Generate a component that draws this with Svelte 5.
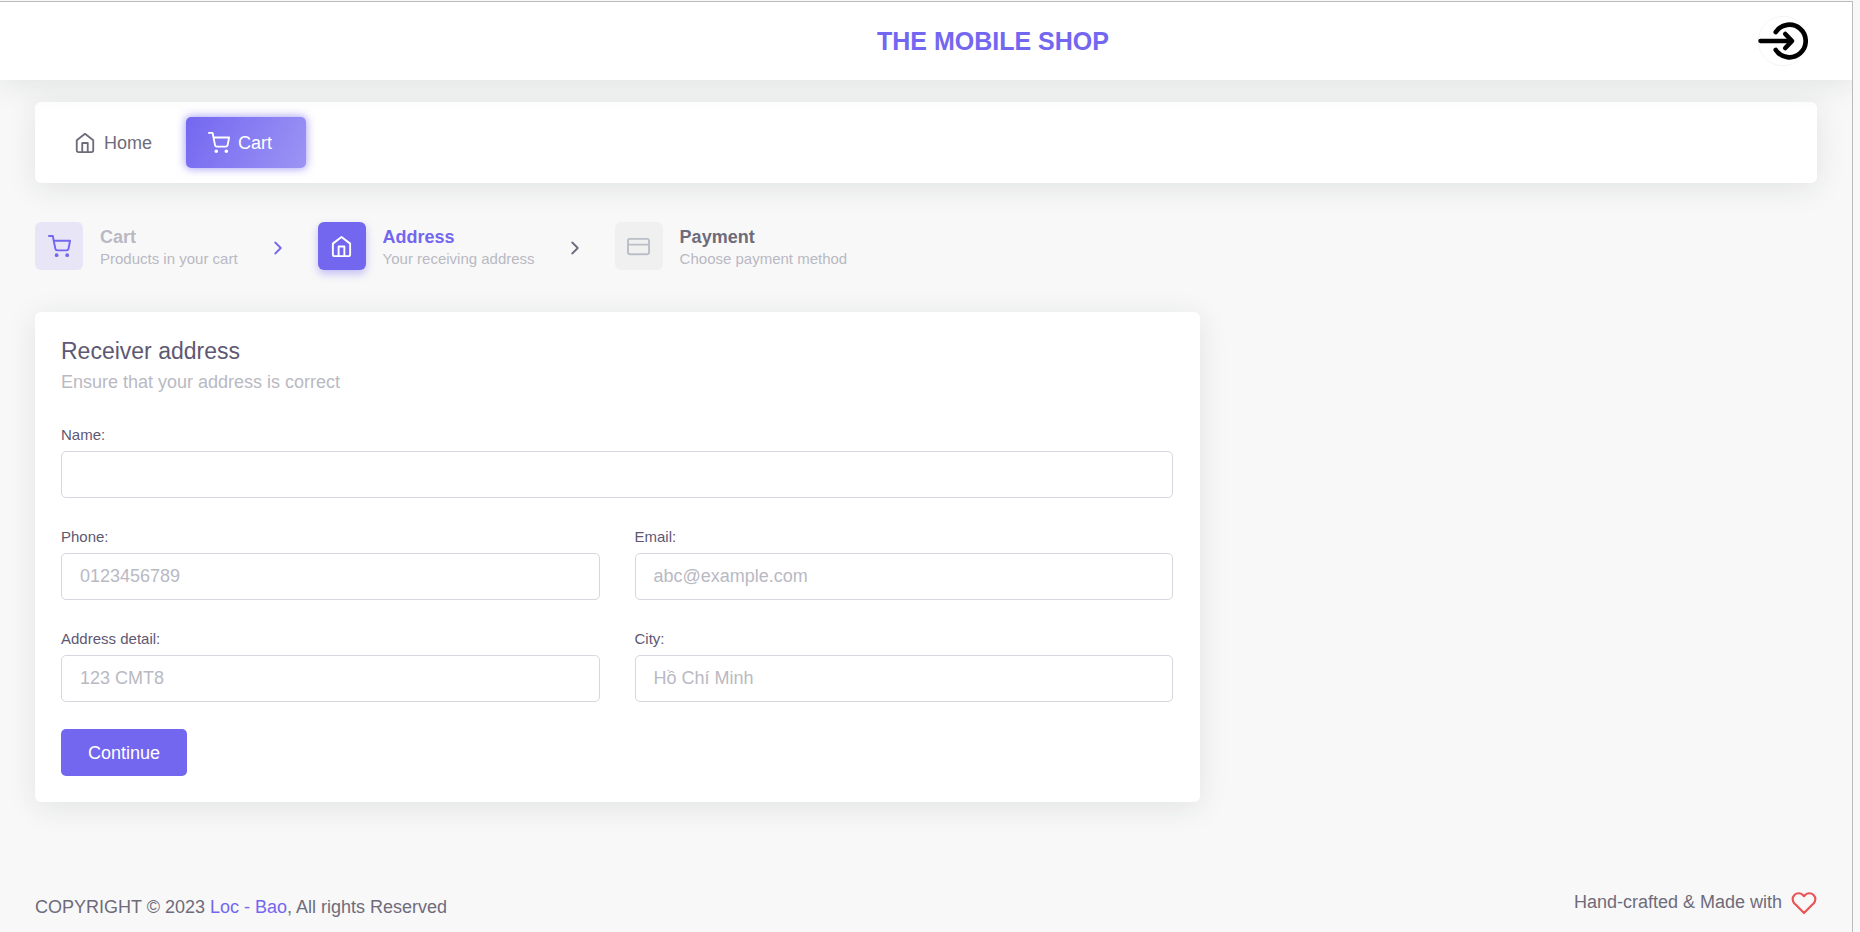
<script lang="ts">
  type IconName = 'home' | 'cart' | 'card' | 'chevron' | 'heart';

  const steps: { title: string; text: string; icon: IconName; state: string }[] = [
    { title: 'Cart', text: 'Products in your cart', icon: 'cart', state: 'done' },
    { title: 'Address', text: 'Your receiving address', icon: 'home', state: 'active' },
    { title: 'Payment', text: 'Choose payment method', icon: 'card', state: 'next' },
  ];

  const fields = [
    { id: 'name', label: 'Name:', placeholder: '', type: 'text', wide: true },
    { id: 'phone', label: 'Phone:', placeholder: '0123456789', type: 'tel', wide: false },
    { id: 'email', label: 'Email:', placeholder: 'abc@example.com', type: 'email', wide: false },
    { id: 'address', label: 'Address detail:', placeholder: '123 CMT8', type: 'text', wide: false },
    { id: 'city', label: 'City:', placeholder: 'Hồ Chí Minh', type: 'text', wide: false },
  ];
</script>

{#snippet icon(name: IconName, size: number)}
  <svg
    width={size}
    height={size}
    viewBox="0 0 24 24"
    fill="none"
    stroke="currentColor"
    stroke-width="2"
    stroke-linecap="round"
    stroke-linejoin="round"
    aria-hidden="true"
  >
    {#if name === 'home'}
      <path d="M3 9l9-7 9 7v11a2 2 0 0 1-2 2H5a2 2 0 0 1-2-2z" />
      <polyline points="9 22 9 12 15 12 15 22" />
    {:else if name === 'cart'}
      <circle cx="9" cy="21" r="1" />
      <circle cx="20" cy="21" r="1" />
      <path d="M1 1h4l2.68 13.39a2 2 0 0 0 2 1.61h9.72a2 2 0 0 0 2-1.61L23 6H6" />
    {:else if name === 'card'}
      <rect x="1" y="4" width="22" height="16" rx="2" ry="2" />
      <line x1="1" y1="10" x2="23" y2="10" />
    {:else if name === 'chevron'}
      <polyline points="9 18 15 12 9 6" />
    {:else}
      <path
        d="M20.84 4.61a5.5 5.5 0 0 0-7.78 0L12 5.67l-1.06-1.06a5.5 5.5 0 0 0-7.78 7.78l1.06 1.06L12 21.23l7.78-7.78 1.06-1.06a5.5 5.5 0 0 0 0-7.78z"
      />
    {/if}
  </svg>
{/snippet}

<div class="page">
  <header class="topbar">
    <h1>THE MOBILE SHOP</h1>
    <button class="login" type="button" aria-label="Log in">
      <svg width="50" height="50" viewBox="0 0 50 50" fill="none" aria-hidden="true">
        <circle cx="25" cy="25" r="24.7" stroke="#ececec" stroke-width="0.6" />
        <g stroke="#000" stroke-width="4.7" stroke-linecap="round" stroke-linejoin="round">
          <path d="M17.8 16A16.3 16.3 0 1 1 17.8 34" />
          <path d="M2.4 25H33" stroke-width="4.3" />
          <path d="M27.3 18L34 25L27.3 32" />
        </g>
      </svg>
    </button>
  </header>

  <nav class="menu card">
    <a href="#home">{@render icon('home', 22)}Home</a>
    <a href="#cart" class="current">{@render icon('cart', 22)}Cart</a>
  </nav>

  <main>
    <ol class="steps">
      {#each steps as step, i}
        {#if i > 0}
          <li class="arrow" class:passed={i === 1}>{@render icon('chevron', 22)}</li>
        {/if}
        <li class="step {step.state}">
          <span class="box">{@render icon(step.icon, 23)}</span>
          <span class="label">
            <strong>{step.title}</strong>
            <small>{step.text}</small>
          </span>
        </li>
      {/each}
    </ol>

    <form class="receiver card" onsubmit={(e) => e.preventDefault()}>
      <h2>Receiver address</h2>
      <p>Ensure that your address is correct</p>
      <div class="fields">
        {#each fields as f}
          <div class="field" class:wide={f.wide}>
            <label for={f.id}>{f.label}</label>
            <input id={f.id} type={f.type} placeholder={f.placeholder} />
          </div>
        {/each}
      </div>
      <button class="submit" type="submit">Continue</button>
    </form>
  </main>

  <footer>
    <span class="copyright">COPYRIGHT © 2023 <a href="#authors">Loc - Bao</a>, All rights Reserved</span>
    <span class="made">Hand-crafted &amp; Made with <span class="heart">{@render icon('heart', 26)}</span></span>
  </footer>
</div>

<style>
  :global(body) {
    background: #f8f8f8;
    color: #6e6b7b;
    font-family: 'Liberation Sans', Arial, sans-serif;
    font-size: 18px;
    line-height: 26px;
  }

  :global(*) {
    box-sizing: border-box;
  }

  svg {
    display: block;
    flex: none;
  }

  a {
    color: #7367f0;
    text-decoration: none;
  }

  .page {
    display: flex;
    flex-direction: column;
    min-height: calc(100vh - 1px);
    margin: 1px 7px 0 0;
    border-top: 1px solid #bbb;
    border-right: 1px solid #bbb;
    overflow: hidden;
  }

  .card {
    background: #fff;
    border-radius: 6px;
    box-shadow: 0 5px 30px rgba(34, 41, 47, 0.1);
  }

  .topbar {
    position: relative;
    z-index: 1;
    display: flex;
    align-items: center;
    padding: 14px 44px 14px 228px;
    background: #fff;
    box-shadow: 0 5px 30px rgba(34, 41, 47, 0.1);
  }

  h1 {
    flex: 1;
    margin: 0;
    color: #7367f0;
    font-size: 25px;
    line-height: 30px;
    font-weight: 700;
    text-align: center;
  }

  .login {
    padding: 0;
    border: 0;
    border-radius: 50%;
    background: none;
  }

  .menu {
    display: flex;
    gap: 12px;
    margin: 22px 35px 0;
    padding: 15px 17px;
  }

  .menu a {
    display: flex;
    align-items: center;
    gap: 8px;
    padding: 13px 22px 12px;
    border-radius: 5px;
    color: #6e6b7b;
  }

  .menu .current {
    padding-right: 34px;
    background: linear-gradient(118deg, #7367f0, rgba(115, 103, 240, 0.7));
    box-shadow: 0 0 8px 1px rgba(115, 103, 240, 0.6);
    color: #fff;
  }

  main {
    padding: 39px 35px 0;
  }

  .steps {
    display: flex;
    align-items: center;
    gap: 29px;
    margin: 0 0 42px;
    padding: 0;
    list-style: none;
  }

  .arrow {
    padding-top: 4px;
  }

  .step {
    display: flex;
    align-items: flex-start;
    gap: 17px;
  }

  .box {
    display: grid;
    place-items: center;
    width: 48px;
    height: 48px;
    border-radius: 6px;
    background: #f0f0f0;
    color: #babfc7;
  }

  .label {
    padding-top: 4px;
  }

  .label strong,
  .label small {
    display: block;
    line-height: 22px;
  }

  .label small {
    color: #b9b9c3;
    font-size: 15px;
  }

  .done strong {
    color: #b9b9c3;
  }

  .done .box {
    background: #e7e5f6;
    color: #7367f0;
  }

  .active strong {
    color: #7367f0;
  }

  .active .box {
    background: #7367f0;
    box-shadow: 0 4px 8px rgba(115, 103, 240, 0.4);
    color: #fff;
  }

  .passed {
    color: #7367f0;
  }

  .receiver {
    max-width: 1165px;
    padding: 26px 27px 26px 26px;
  }

  h2 {
    margin: 0;
    color: #5e5873;
    font-size: 23px;
    line-height: 26px;
    font-weight: 400;
  }

  .receiver p {
    margin: 5px 0 29px;
    color: #b9b9c3;
  }

  .fields {
    display: grid;
    grid-template-columns: 1fr 1fr;
    gap: 28px 35px;
  }

  .wide {
    grid-column: 1 / -1;
  }

  label {
    display: block;
    margin-bottom: 5px;
    color: #5e5873;
    font-size: 15px;
    line-height: 22px;
  }

  input {
    display: block;
    width: 100%;
    height: 47px;
    padding: 0 18px;
    border: 1px solid #d8d6de;
    border-radius: 5px;
    background: #fff;
    color: #6e6b7b;
    font: inherit;
  }

  input::placeholder {
    color: #b9b9c3;
    opacity: 1;
  }

  .submit {
    margin-top: 27px;
    padding: 0 27px;
    height: 47px;
    border: 0;
    border-radius: 5px;
    background: #7367f0;
    color: #fff;
    font: inherit;
  }

  footer {
    display: flex;
    flex-wrap: wrap;
    justify-content: space-between;
    align-items: flex-start;
    margin-top: auto;
    padding: 0 35px 12px;
  }

  .copyright {
    padding-top: 4px;
  }

  .made {
    display: flex;
    align-items: flex-start;
    gap: 9px;
    line-height: 24px;
  }

  .heart {
    color: #ea5455;
  }
</style>
